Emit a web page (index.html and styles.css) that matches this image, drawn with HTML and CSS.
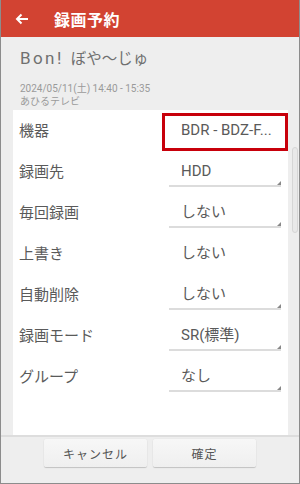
FILE: index.html
```html
<!DOCTYPE html>
<html lang="ja">
<head>
    <meta charset="UTF-8">
    <meta name="viewport" content="width=device-width, initial-scale=1.0">
    <title>録画予約</title>
    <link rel="stylesheet" href="styles.css">
</head>
<body>
    <div class="screen">
        <div class="app-bar">
            <svg class="back" width="14" height="12" viewBox="0 0 14 12">
                <path d="M13 6H2M6.5 1.5L2 6l4.5 4.5" fill="none" stroke="#fff" stroke-width="2"/>
            </svg>
            <span class="app-title">録画予約</span>
        </div>

        <div class="program">
            <div class="program-title"><span class="latin">Bon!</span>ぼや〜じゅ</div>
            <div class="program-time">2024/05/11(土) 14:40 - 15:35</div>
            <div class="program-channel">あひるテレビ</div>
        </div>

        <div class="panel">
            <div class="row">
                <span class="label">機器</span>
                <span class="value plain">BDR - BDZ-F...</span>
                <div class="mark"></div>
            </div>
            <div class="row">
                <span class="label">録画先</span>
                <span class="value">HDD</span>
            </div>
            <div class="row">
                <span class="label">毎回録画</span>
                <span class="value">しない</span>
            </div>
            <div class="row">
                <span class="label">上書き</span>
                <span class="value plain">しない</span>
            </div>
            <div class="row">
                <span class="label">自動削除</span>
                <span class="value">しない</span>
            </div>
            <div class="row">
                <span class="label">録画モード</span>
                <span class="value">SR(標準)</span>
            </div>
            <div class="row">
                <span class="label">グループ</span>
                <span class="value">なし</span>
            </div>
        </div>
        <div class="scrollbar"></div>

        <div class="bottom-bar">
            <button class="btn">キャンセル</button>
            <button class="btn">確定</button>
        </div>
    </div>
</body>
</html>
```

FILE: styles.css
```css
body {
    margin: 0;
    font-family: 'Roboto', 'Noto Sans CJK JP', sans-serif;
}
.screen {
    position: relative;
    width: 300px;
    height: 484px;
    box-sizing: border-box;
    border: 1px solid #8c8c8c;
    border-top: none;
    background-color: #eeeeee;
    display: flex;
    flex-direction: column;
}
.app-bar {
    height: 37px;
    flex-shrink: 0;
    background-color: #d24332;
    display: flex;
    align-items: center;
    padding-left: 14px;
}
.back {
    margin-right: 25px;
}
.app-title {
    color: #fff;
    font-size: 16px;
    font-weight: bold;
    letter-spacing: 0.5px;
}
.program {
    padding: 10px 0 0 19px;
    height: 73px;
    flex-shrink: 0;
    box-sizing: border-box;
}
.program-title {
    font-size: 15.5px;
    line-height: 22px;
    color: #707070;
    margin-bottom: 12px;
}
.latin {
    font-size: 17px;
    letter-spacing: 2.4px;
    margin-right: 7px;
}
.program-time,
.program-channel {
    font-size: 10px;
    line-height: 13px;
    color: #9a9a9a;
}
.panel {
    flex: 1;
    margin: 0 11px 0 12px;
    background-color: #fff;
    overflow: hidden;
}
.row {
    position: relative;
    height: 41px;
    box-sizing: border-box;
    padding: 0 0 3px 6px;
    display: flex;
    align-items: center;
}
.label {
    width: 150px;
    font-size: 15px;
    color: #5a5a5a;
}
.value {
    position: relative;
    width: 100px;
    height: 26px;
    line-height: 24px;
    padding-left: 12px;
    margin-top: 5px;
    font-size: 15px;
    color: #5a5a5a;
    border-bottom: 2px solid #dcdcdc;
}
.value::after {
    content: "";
    position: absolute;
    right: 0;
    bottom: 0;
    border-left: 4px solid transparent;
    border-bottom: 4px solid #888;
}
.value.plain {
    border-bottom-color: transparent;
}
.value.plain::after {
    display: none;
}
.mark {
    position: absolute;
    left: 149px;
    top: 3px;
    width: 126px;
    height: 38px;
    box-sizing: border-box;
    border: 3px solid #c8000b;
}
.scrollbar {
    position: absolute;
    left: 291px;
    top: 147px;
    width: 4px;
    height: 84px;
    border: 1px solid #d6d6d6;
    border-radius: 3px;
    background-color: #e9e9e9;
}
.bottom-bar {
    height: 48px;
    flex-shrink: 0;
    border-top: 2px solid #dddddd;
    box-sizing: border-box;
    display: flex;
    justify-content: center;
    gap: 6px;
    padding-top: 2px;
}
.btn {
    width: 103px;
    height: 28px;
    border: none;
    border-radius: 2px;
    background: linear-gradient(#f7f7f7, #efefef);
    box-shadow: 0 1px 1px rgba(0, 0, 0, 0.18), 0 0 1px rgba(0, 0, 0, 0.12);
    font-family: 'Roboto', 'Noto Sans CJK JP', sans-serif;
    font-size: 12px;
    letter-spacing: 1px;
    color: #555;
}
```
